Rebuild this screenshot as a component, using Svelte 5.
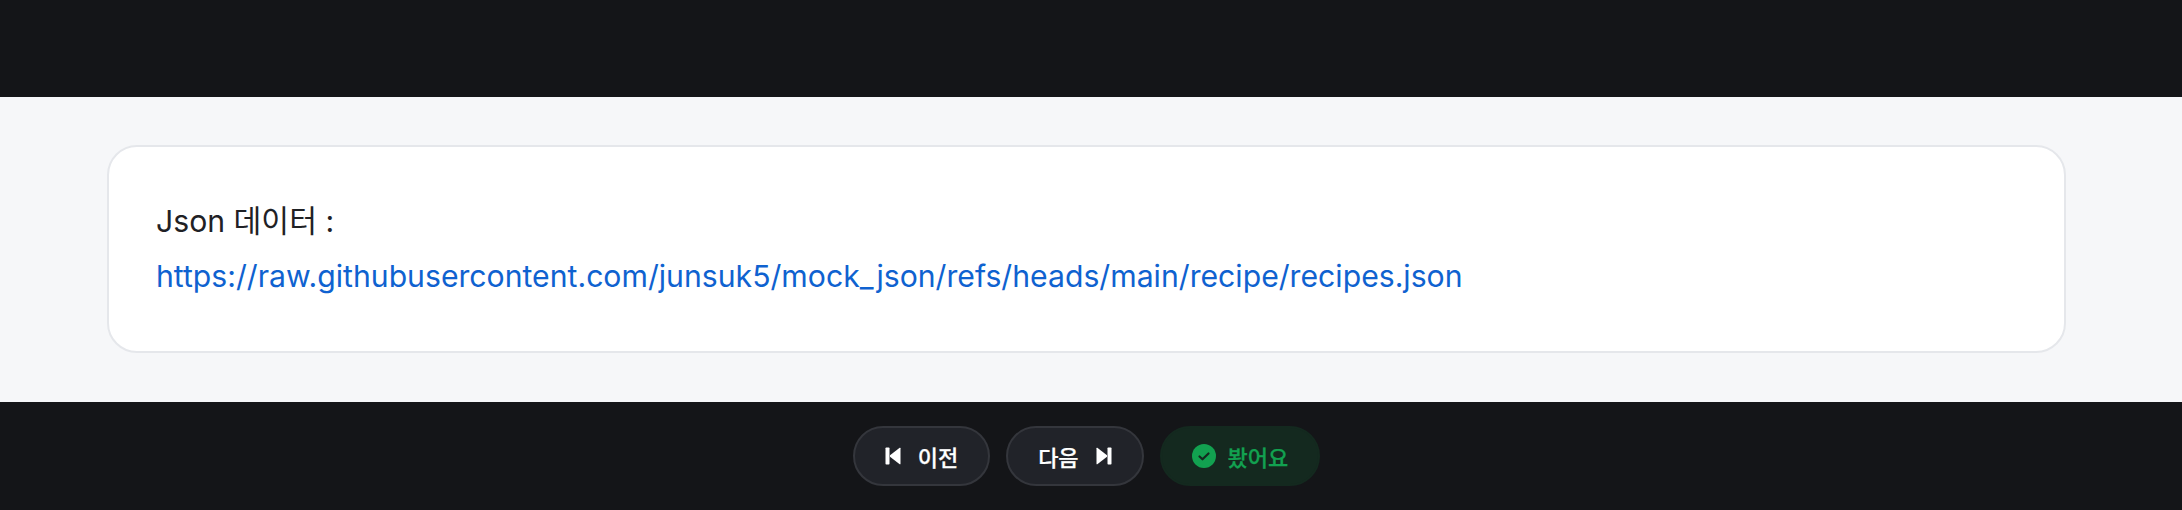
<script>
  const url = "https://raw.githubusercontent.com/junsuk5/mock_json/refs/heads/main/recipe/recipes.json";
</script>

<div class="page">
  <div class="top"></div>
  <main class="content">
    <section class="card">
      <p>Json 데이터 :</p>
      <p><a href={url}>{url}</a></p>
    </section>
  </main>
  <nav class="bottom">
    <button class="btn">
      <svg viewBox="0 0 16 18" width="16" height="18" aria-hidden="true"><rect x="0.5" y="0.5" width="4" height="17" rx="0.8"/><path d="M15.5 1.2V16.8Q15.5 17.6 14.7 17.2L5 9.8V8.2L14.7 0.8Q15.5 0.4 15.5 1.2Z"/></svg>
      <span>이전</span>
    </button>
    <button class="btn">
      <span>다음</span>
      <svg viewBox="0 0 16 18" width="16" height="18" aria-hidden="true"><rect x="11.5" y="0.5" width="4" height="17" rx="0.8"/><path d="M0.5 1.2V16.8Q0.5 17.6 1.3 17.2L11 9.8V8.2L1.3 0.8Q0.5 0.4 0.5 1.2Z"/></svg>
    </button>
    <button class="btn seen">
      <svg viewBox="0 0 24 24" width="24" height="24" aria-hidden="true"><circle cx="12" cy="12" r="12" fill="#12a150"/><path d="M7.5 12.5l3 2.8L16.5 9.5" fill="none" stroke="#14291f" stroke-width="2.2" stroke-linecap="round" stroke-linejoin="round"/></svg>
      <span>봤어요</span>
    </button>
  </nav>
</div>

<style>
  :global(body) { margin: 0; background: #141518; }
  .page { width: 2182px; height: 510px; display: flex; flex-direction: column; font-family: Inter, "Noto Sans CJK KR", sans-serif; }
  .top { height: 97px; background: #141518; }
  .content { height: 305px; box-sizing: border-box; padding: 48px 116px 48px 107px; background: #f6f7f9; }
  .card { box-sizing: border-box; height: 208px; padding: 47px 47px; background: #fff; border: 2px solid #e5e7eb; border-radius: 30px; font-size: 30.2px; line-height: 55px; color: #1f2125; }
  p { margin: 0; }
  a { color: #0f62d0; text-decoration: none; }
  .bottom { height: 108px; display: flex; justify-content: center; align-items: center; gap: 16px; padding-right: 9px; background: #141518; }
  .btn { box-sizing: border-box; height: 60px; padding: 0 30px; display: flex; align-items: center; gap: 17px; border: 2px solid #34363c; border-radius: 30px; background: #212329; color: #fff; font: 500 22px Inter, "Noto Sans CJK KR", sans-serif; -webkit-text-stroke: 0.25px currentColor; }
  .btn svg { fill: #fff; flex: none; }
  .seen { border-color: #14291f; background: #14291f; color: #12a150; gap: 12px; }
</style>
